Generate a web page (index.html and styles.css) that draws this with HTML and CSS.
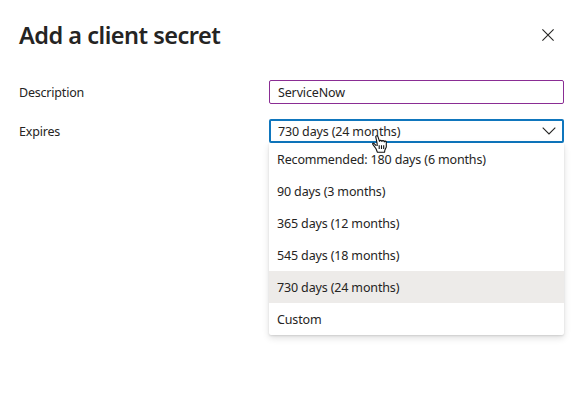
FILE: index.html
```html
<!DOCTYPE html>
<html lang="en">
<head>
<meta charset="utf-8">
<title>Add a client secret</title>
<link rel="stylesheet" href="styles.css">
</head>
<body>
<main class="panel">
  <header class="header">
    <h1 class="title">Add a client secret</h1>
    <svg class="close" width="12" height="12" viewBox="0 0 12 12"><path d="M.4.4 11.6 11.6M11.6.4.4 11.6"/></svg>
  </header>
  <div class="row">
    <span class="label">Description</span>
    <div class="field input"><span>ServiceNow</span></div>
  </div>
  <div class="row">
    <span class="label">Expires</span>
    <div class="field select">
      <span>730 days (24 months)</span>
      <svg class="chevron" width="14" height="8" viewBox="0 0 14 8"><path d="M.7.7 7 7 13.3.7"/></svg>
      <ul class="menu">
        <li>Recommended: 180 days (6 months)</li>
        <li>90 days (3 months)</li>
        <li>365 days (12 months)</li>
        <li>545 days (18 months)</li>
        <li class="selected">730 days (24 months)</li>
        <li>Custom</li>
      </ul>
      <svg class="cursor" width="16" height="18" viewBox="0 0 16 18"><path d="M4.2 10.7 2.2 8.6C1 7.5.1 8.5 1 9.7l3 4.1 1.4 3.5h7.2l.2-2.1 1.5-3.1V7.3c0-1.4-1.7-1.5-2-.4-.1-1.6-2.1-1.7-2.4-.4-.2-1.4-2.1-1.5-2.4-.2L6 1.8C5.6.2 3.5.5 3.8 2.1l1.3 6.3.1 2.6"/><path d="M7.2 10.2v3.7M9.5 10.2v3.7M11.7 10.2v3.7"/></svg>
    </div>
  </div>
</main>
</body>
</html>
```
FILE: styles.css
```css
* { box-sizing: border-box; }
body {
  margin: 0;
  background: #fff;
  color: #252423;
  font: 12.5px/18px "Segoe UI", "Noto Sans", "Open Sans", sans-serif;
}
.panel { height: 407px; padding: 18px 21px 0 19px; overflow: hidden; }
.header { display: flex; justify-content: space-between; align-items: center; height: 34px; margin-bottom: 28px; padding-right: 10px; }
.title { margin: 0; font-size: 23.5px; line-height: 34px; font-weight: 600; letter-spacing: -0.5px; white-space: nowrap; }
svg { fill: none; stroke: #252423; stroke-width: 1.1; }
.row { display: flex; align-items: center; height: 24px; margin-bottom: 15px; }
.row span { padding-top: 2px; }
.label { width: 250px; letter-spacing: -0.2px; }
.field { display: flex; align-items: center; flex: 1; height: 24px; border-radius: 2px; white-space: nowrap; letter-spacing: -0.15px; }
.input { border: 1px solid #8a2d94; padding: 0 8px; }
.select { position: relative; justify-content: space-between; border: 2px solid #0f76bd; padding: 0 6px 0 7px; }
.menu {
  position: absolute; top: 22px; left: -2px; width: 295px;
  margin: 0; padding: 0; list-style: none; background: #fff;
  border-radius: 0 0 2px 2px;
  box-shadow: 0 3px 7px rgba(0,0,0,.13), 0 1px 2px rgba(0,0,0,.11);
}
.menu li { height: 32px; padding: 0 8px; line-height: 34px; }
.menu .selected { background: #edebe9; }
.cursor { position: absolute; left: 101px; top: 14px; }
.cursor path { stroke: #111; stroke-width: 1.1; stroke-linejoin: round; }
.cursor path:first-child { fill: #fff; }
```
